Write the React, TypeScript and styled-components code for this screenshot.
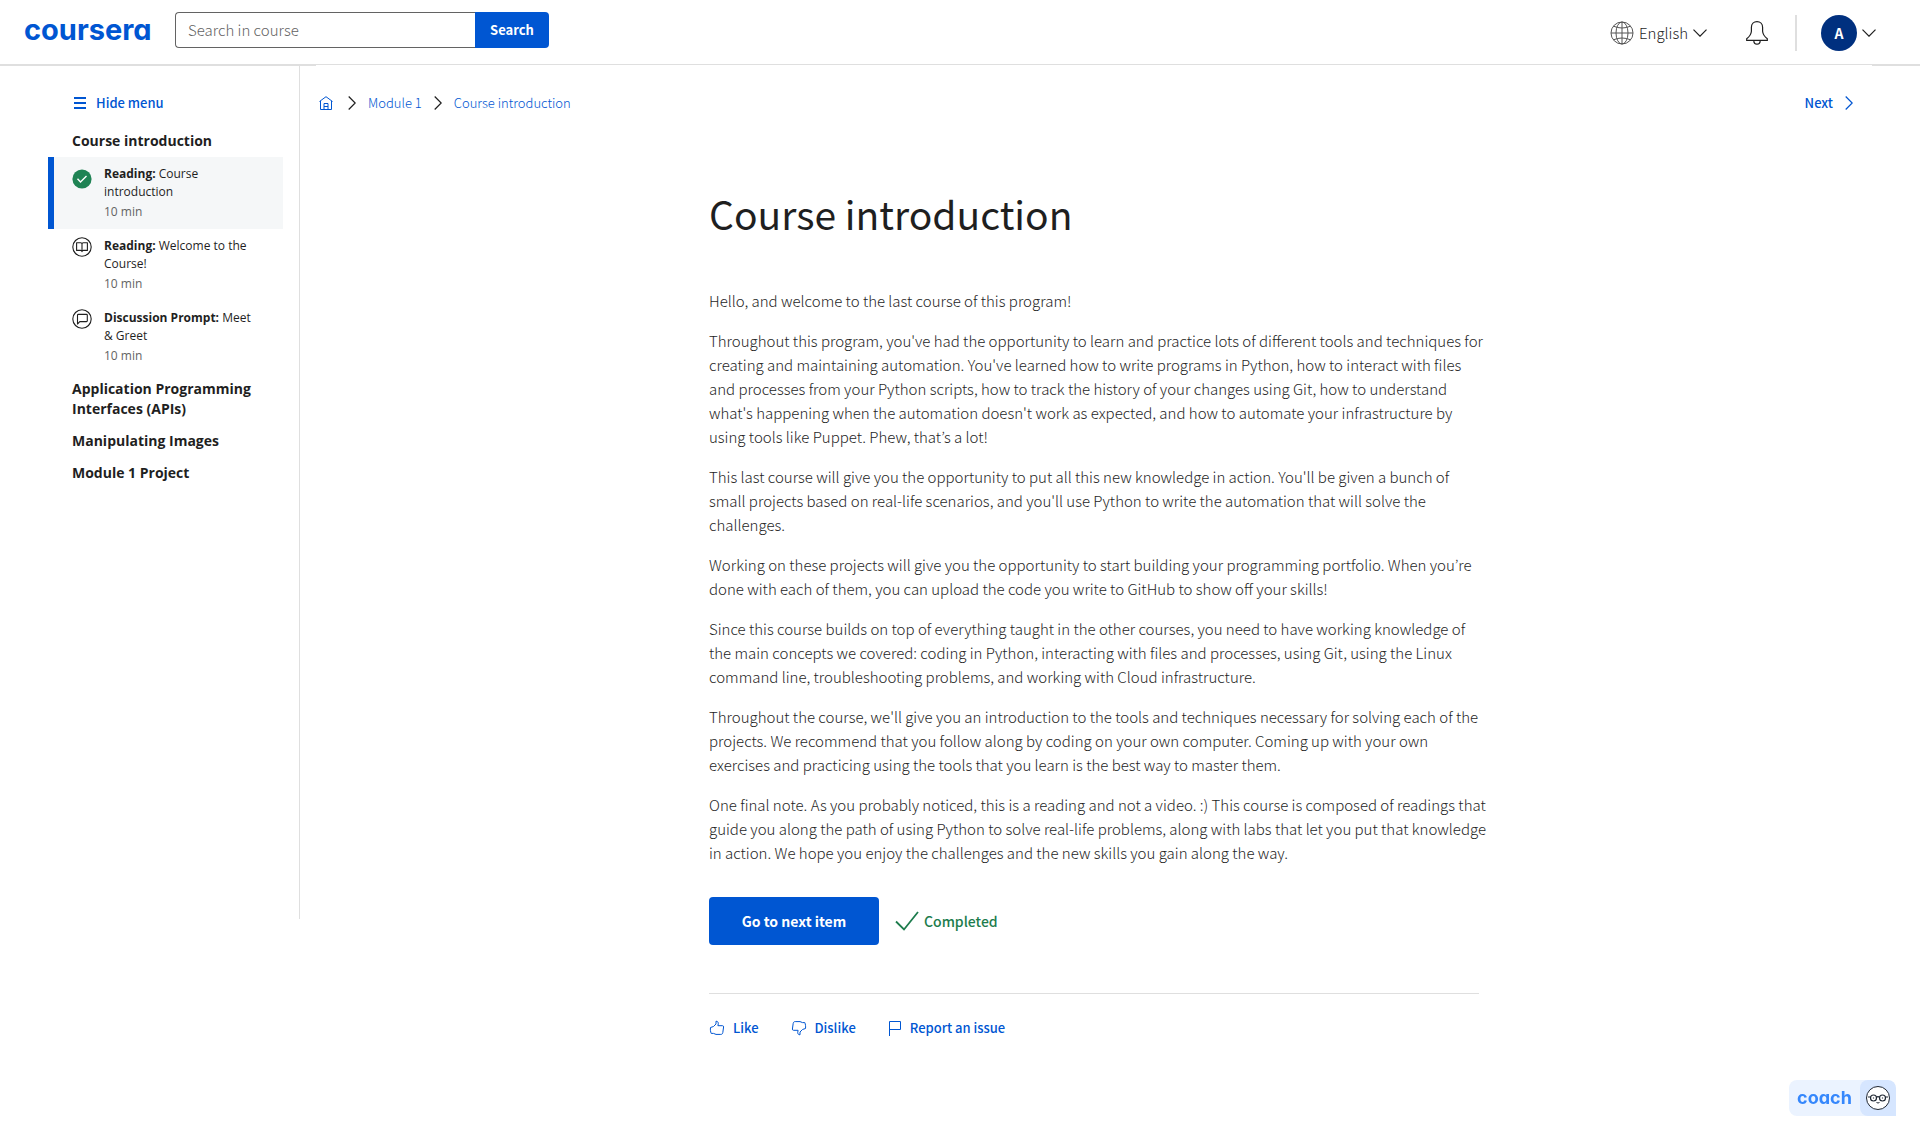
import React from "react";
import styled, { createGlobalStyle } from "styled-components";

const blue = "#0056d2";
const ink = "#1f1f1f";
const line = "#dfdfdf";
const sourceSans = `"Source Sans Pro", "Noto Sans CJK KR", "Noto Sans", sans-serif`;
const openSans = `"Open Sans", "Noto Sans", sans-serif`;
const brandSans = `Inter, "Noto Sans", sans-serif`;

const GlobalStyle = createGlobalStyle`
  *, *::before, *::after { box-sizing: border-box; }
  body { margin: 0; background: #fff; color: ${ink}; font-family: ${sourceSans}; font-size: 14px; line-height: 24px; }
  button, input { font: inherit; color: inherit; }
  button { border: 0; padding: 0; background: none; cursor: pointer; }
  a { text-decoration: none; }
  h1, h2, p, ul, ol { margin: 0; padding: 0; }
  ul, ol { list-style: none; }
  svg { display: block; flex: none; }
`;

const Header = styled.header`
  display: flex;
  align-items: flex-start;
  justify-content: space-between;
  height: 65px;
  padding: 12px 44px 0 24px;
  border-bottom: 1px solid ${line};
`;

const HeaderGroup = styled.div`
  display: flex;
  align-items: center;
`;

const Logo = styled.a`
  width: 151px;
  color: ${blue};
  font-family: ${brandSans};
  font-feature-settings: "cv11";
  font-size: 29px;
  font-weight: 700;
  line-height: 36px;
`;

const SearchForm = styled.form`
  display: flex;
  height: 36px;
`;

const SearchInput = styled.input`
  width: 300px;
  padding: 0 12px;
  border: 1px solid #636363;
  border-right: 0;
  border-radius: 4px 0 0 4px;
  background: #fff;
  outline: none;
  font-size: 15px;
  font-weight: 300;
  &::placeholder { color: #636363; opacity: 1; }
`;

const SearchButton = styled.button`
  width: 74px;
  border-radius: 0 4px 4px 0;
  background: ${blue};
  color: #fff;
  font-size: 13px;
  font-weight: 700;
`;

const AccountGroup = styled(HeaderGroup)`
  padding-top: 3px;
`;

const LanguageButton = styled.button`
  display: flex;
  align-items: center;
  gap: 5px;
  margin-right: 39px;
  font-size: 15px;
  font-weight: 300;
`;

const BellButton = styled.button`
  margin-right: 27px;
`;

const Separator = styled.span`
  width: 2px;
  height: 36px;
  margin-right: 24px;
  background: ${line};
`;

const ProfileButton = styled.button`
  display: flex;
  align-items: center;
  gap: 5px;
`;

const Avatar = styled.span`
  width: 36px;
  height: 36px;
  border-radius: 50%;
  background: #00307f;
  color: #fff;
  font-weight: 700;
  line-height: 36px;
`;

const Shell = styled.div`
  display: flex;
  align-items: flex-start;
  padding-right: 48px;
  border-top: 1px solid ${line};
`;

const Sidebar = styled.nav`
  flex: none;
  width: 300px;
  height: calc(100vh - 287px);
  margin-right: 16px;
  padding: 25px 16px 0 48px;
  border-right: 1px solid ${line};
  font-family: ${openSans};
`;

const MenuToggle = styled.button`
  display: flex;
  align-items: center;
  gap: 10px;
  margin: 0 0 10px 24px;
  padding-left: 2px;
  color: ${blue};
  font-family: ${sourceSans};
  font-size: 13px;
  font-weight: 500;
`;

const SectionTitle = styled.h2`
  padding: 6px 24px;
  color: ${ink};
  font-size: 14px;
  font-weight: 700;
  line-height: 20px;
`;

const Lesson = styled.a<{ $active?: boolean }>`
  display: flex;
  gap: 12px;
  padding: 8px 24px 6px 18px;
  border-left: 6px solid ${(p) => (p.$active ? blue : "transparent")};
  background: ${(p) => (p.$active ? "#f5f7f8" : "transparent")};
  color: ${ink};
  font-size: 12px;
  line-height: 18px;
  & > svg { margin-top: ${(p) => (p.$active ? "4px" : "0")}; }
`;

const LessonKind = styled.strong`
  font-weight: 700;
`;

const Duration = styled.p`
  color: #636363;
  line-height: 22px;
`;

const Main = styled.main`
  flex: 1;
  min-width: 0;
  margin-top: -1px;
  padding-top: 26px;
  background: #fff;
`;

const TopRow = styled.div`
  display: flex;
  align-items: center;
  justify-content: space-between;
  padding: 0 19px 0 3px;
`;

const Crumbs = styled.ol`
  display: flex;
  align-items: center;
  font-size: 13px;
  font-weight: 300;
`;

const Crumb = styled.li`
  display: flex;
  align-items: center;
  & > svg { margin: 0 12px; }
  &:first-child { padding-right: 3px; }
`;

const CrumbLink = styled.a`
  color: ${blue};
`;

const NextLink = styled.a`
  display: flex;
  align-items: center;
  gap: 12px;
  color: ${blue};
  font-size: 13px;
  font-weight: 500;
`;

const Article = styled.article`
  max-width: 770px;
  margin: 74px auto 0;
`;

const Title = styled.h1`
  margin-bottom: 52px;
  font-size: 39px;
  font-weight: 400;
  line-height: 48px;
`;

const Prose = styled.div`
  margin-right: -8px;
`;

const Paragraph = styled.p`
  margin-bottom: 16px;
  font-size: 15px;
  font-weight: 300;
`;

const Actions = styled.div`
  display: flex;
  align-items: center;
  gap: 16px;
  padding: 16px 0 48px;
  border-bottom: 1px solid ${line};
`;

const PrimaryButton = styled.button`
  width: 170px;
  height: 48px;
  border-radius: 4px;
  background: ${blue};
  color: #fff;
  font-weight: 700;
`;

const Completed = styled.span`
  display: flex;
  align-items: center;
  gap: 5px;
  color: #1d7c4d;
  font-weight: 500;
`;

const Feedback = styled.div`
  display: flex;
  gap: 32px;
  padding-top: 22px;
`;

const FeedbackButton = styled.button`
  display: flex;
  align-items: center;
  gap: 8px;
  color: ${blue};
  font-size: 13px;
  font-weight: 500;
`;

const CoachButton = styled.button`
  position: fixed;
  right: 24px;
  bottom: 24px;
  display: flex;
  width: 107px;
  height: 36px;
  border-radius: 8px 8px 0 8px;
  background: #ebf3ff;
  overflow: hidden;
`;

const CoachLabel = styled.span`
  flex: 1;
  color: #3587fc;
  font-family: ${brandSans};
  font-feature-settings: "cv11";
  font-size: 18px;
  font-weight: 700;
  line-height: 36px;
`;

const CoachFace = styled.span`
  display: grid;
  place-items: center;
  width: 36px;
  height: 36px;
  border-radius: 8px 8px 0 8px;
  background: #d6e6ff;
`;

const ChevronDown = () => (
  <svg width="14" height="8" viewBox="0 0 14 8" fill="none" stroke={ink} strokeWidth="1.2" aria-hidden="true">
    <path d="M0.5 0.7 7 7.2 13.5 0.7" />
  </svg>
);

const ChevronRight = ({ color = ink }: { color?: string }) => (
  <svg width="8" height="14" viewBox="0 0 8 14" fill="none" stroke={color} strokeWidth="1.2" aria-hidden="true">
    <path d="M0.7 0.5 7.2 7 0.7 13.5" />
  </svg>
);

const Globe = () => (
  <svg width="24" height="24" viewBox="0 0 24 24" fill="none" stroke="#555" strokeWidth="1" aria-hidden="true">
    <circle cx="12" cy="12" r="11" />
    <ellipse cx="12" cy="12" rx="6" ry="11" />
    <path d="M12 1v22M1 12h22M3.5 5.2Q12 8.8 20.5 5.2M3.5 18.8Q12 15.2 20.5 18.8" />
  </svg>
);

const Bell = () => (
  <svg width="22" height="24" viewBox="0 0 22 24" fill="none" stroke={ink} strokeWidth="1.2" aria-hidden="true">
    <path d="M.7 19.4v-1.7c2.6-2 4.5-4.4 4.7-7.5V6.2C5.4 3 7.8.7 11 .7s5.6 2.3 5.6 5.500v4c.2 3.1 2.1 5.500 4.700 7.500v1.700Z" />
    <path d="M7.8 19.4c0 2.3 1.3 3.7 3.2 3.7s3.2-1.4 3.2-3.7" />
  </svg>
);

const MenuIcon = () => (
  <svg width="12" height="12" viewBox="0 0 12 12" fill={blue} aria-hidden="true">
    <path d="M0 0h12v2H0zM0 5h12v2H0zM0 10h12v2H0z" />
  </svg>
);

const HomeIcon = () => (
  <svg width="14" height="14" viewBox="0 0 14 14" fill="none" stroke={blue} strokeWidth="1" aria-hidden="true">
    <path d="M.5 5.5 7 .7l6.5 4.800M1.500 5v8.500h11V5M5 13.500v-6h4v6M5 10.500h4" />
  </svg>
);

const DoneIcon = () => (
  <svg width="20" height="20" viewBox="0 0 20 20" fill="none" aria-hidden="true">
    <circle cx="10" cy="10" r="9.6" fill="#1f8354" />
    <path d="m5.5 9.8 3 3.2 6-6" stroke="#fff" strokeWidth="1.4" />
  </svg>
);

const BookIcon = () => (
  <svg width="20" height="20" viewBox="0 0 20 20" fill="none" stroke={ink} strokeWidth="1.1" strokeLinejoin="round" aria-hidden="true">
    <circle cx="10" cy="10" r="9.2" />
    <path d="M10 7c0-.7-.6-1.2-1.3-1.2H4.6v7.6h4c.8 0 1.4.5 1.4 1.2 0-.7.6-1.2 1.4-1.2h4V5.8h-4.100C10.6 5.8 10 6.3 10 7Zm0 0v7.6" />
  </svg>
);

const PromptIcon = () => (
  <svg width="20" height="20" viewBox="0 0 20 20" fill="none" stroke={ink} strokeWidth="1.1" strokeLinejoin="round" aria-hidden="true">
    <circle cx="10" cy="10" r="9.2" />
    <path d="M5.5 15V6.2c0-.5.3-.8.8-.8h8.200c.5 0 .8.3.8.8v5.600c0 .5-.3.8-.8.8H7.800Z" />
  </svg>
);

const CheckIcon = () => (
  <svg width="24" height="20" viewBox="0 0 24 20" fill="none" stroke="#1d7c4d" strokeWidth="1.8" aria-hidden="true">
    <path d="m1 10.5 8 8L23 1" />
  </svg>
);

const ThumbIcon = ({ down }: { down?: boolean }) => (
  <svg width="16" height="16" viewBox="0 0 16 16" fill="none" stroke={blue} strokeWidth="1" strokeLinejoin="round" aria-hidden="true">
    <path
      transform={down ? "rotate(180 8 8)" : undefined}
      d="M1.5 7.5 4.5 6.5 7 4V1.200c1.6 0 2.3 1 2.3 2.300L8.900 5.700h4.600c.7 0 1.2.5 1.1 1.200l-.8 5.700c-.2 1.200-.8 1.800-2 1.800H7L4.500 13.400H2.200c-.7-1.600-1-3.800-.7-5.900Z"
    />
  </svg>
);

const FlagIcon = () => (
  <svg width="14" height="16" viewBox="0 0 14 16" fill="none" stroke={blue} strokeWidth="1" aria-hidden="true">
    <path d="M1.5 16V1.5h11v8h-11" />
  </svg>
);

const Face = () => (
  <svg width="24" height="24" viewBox="0 0 24 24" fill="none" stroke="#1f2733" aria-hidden="true">
    <circle cx="12" cy="12" r="11.5" fill="#fff" />
    <path d="M2 11h2.5M19.5 11H22M10.5 11.2q1.5-1 3 0" strokeWidth="1.2" />
    <circle cx="7.5" cy="12" r="3" strokeWidth="1.2" />
    <circle cx="16.5" cy="12" r="3" strokeWidth="1.2" />
    <path d="M7.5 11.4v1.2M16.5 11.4v1.2" strokeWidth="1.2" />
    <path d="M10.5 16.5q1.5 1 3 0" strokeWidth="1" />
  </svg>
);

const lessons = [
  { kind: "Reading:", name: "Course introduction", icon: <DoneIcon />, active: true },
  { kind: "Reading:", name: "Welcome to the Course!", icon: <BookIcon /> },
  { kind: "Discussion Prompt:", name: "Meet & Greet", icon: <PromptIcon /> },
];

const otherSections = ["Application Programming Interfaces (APIs)", "Manipulating Images", "Module 1 Project"];

const paragraphs = [
  "Hello, and welcome to the last course of this program!",
  "Throughout this program, you've had the opportunity to learn and practice lots of different tools and techniques for creating and maintaining automation. You've learned how to write programs in Python, how to interact with files and processes from your Python scripts, how to track the history of your changes using Git, how to understand what's happening when the automation doesn't work as expected, and how to automate your infrastructure by using tools like Puppet. Phew, that’s a lot!",
  "This last course will give you the opportunity to put all this new knowledge in action. You'll be given a bunch of small projects based on real-life scenarios, and you'll use Python to write the automation that will solve the challenges.",
  "Working on these projects will give you the opportunity to start building your programming portfolio. When you’re done with each of them, you can upload the code you write to GitHub to show off your skills!",
  "Since this course builds on top of everything taught in the other courses, you need to have working knowledge of the main concepts we covered: coding in Python, interacting with files and processes, using Git, using the Linux command line, troubleshooting problems, and working with Cloud infrastructure.",
  "Throughout the course, we'll give you an introduction to the tools and techniques necessary for solving each of the projects. We recommend that you follow along by coding on your own computer. Coming up with your own exercises and practicing using the tools that you learn is the best way to master them.",
  "One final note. As you probably noticed, this is a reading and not a video. :) This course is composed of readings that guide you along the path of using Python to solve real-life problems, along with labs that let you put that knowledge in action. We hope you enjoy the challenges and the new skills you gain along the way.",
];

export default function App() {
  return (
    <>
      <GlobalStyle />
      <Header>
        <HeaderGroup>
          <Logo href="#">coursera</Logo>
          <SearchForm role="search" onSubmit={(e) => e.preventDefault()}>
            <SearchInput type="text" aria-label="Search in course" placeholder="Search in course" />
            <SearchButton type="submit">Search</SearchButton>
          </SearchForm>
        </HeaderGroup>
        <AccountGroup>
          <LanguageButton type="button">
            <Globe />
            English
            <ChevronDown />
          </LanguageButton>
          <BellButton type="button" aria-label="Notifications">
            <Bell />
          </BellButton>
          <Separator />
          <ProfileButton type="button" aria-label="Account">
            <Avatar>A</Avatar>
            <ChevronDown />
          </ProfileButton>
        </AccountGroup>
      </Header>
      <Shell>
        <Sidebar aria-label="Course">
          <MenuToggle type="button">
            <MenuIcon />
            Hide menu
          </MenuToggle>
          <SectionTitle>Course introduction</SectionTitle>
          <ul>
            {lessons.map((lesson) => (
              <li key={lesson.name}>
                <Lesson href="#" $active={lesson.active}>
                  {lesson.icon}
                  <div>
                    <p>
                      <LessonKind>{lesson.kind}</LessonKind> {lesson.name}
                    </p>
                    <Duration>10 min</Duration>
                  </div>
                </Lesson>
              </li>
            ))}
          </ul>
          {otherSections.map((name) => (
            <SectionTitle key={name}>{name}</SectionTitle>
          ))}
        </Sidebar>
        <Main>
          <TopRow>
            <Crumbs>
              <Crumb>
                <CrumbLink href="#" aria-label="Home">
                  <HomeIcon />
                </CrumbLink>
              </Crumb>
              <Crumb>
                <ChevronRight />
                <CrumbLink href="#">Module 1</CrumbLink>
              </Crumb>
              <Crumb>
                <ChevronRight />
                <CrumbLink href="#">Course introduction</CrumbLink>
              </Crumb>
            </Crumbs>
            <NextLink href="#">
              Next
              <ChevronRight color={blue} />
            </NextLink>
          </TopRow>
          <Article>
            <Title>Course introduction</Title>
            <Prose>
              {paragraphs.map((text) => (
                <Paragraph key={text}>{text}</Paragraph>
              ))}
            </Prose>
            <Actions>
              <PrimaryButton type="button">Go to next item</PrimaryButton>
              <Completed>
                <CheckIcon />
                Completed
              </Completed>
            </Actions>
            <Feedback>
              <FeedbackButton type="button">
                <ThumbIcon />
                Like
              </FeedbackButton>
              <FeedbackButton type="button">
                <ThumbIcon down />
                Dislike
              </FeedbackButton>
              <FeedbackButton type="button">
                <FlagIcon />
                Report an issue
              </FeedbackButton>
            </Feedback>
          </Article>
        </Main>
      </Shell>
      <CoachButton type="button">
        <CoachLabel>coach</CoachLabel>
        <CoachFace>
          <Face />
        </CoachFace>
      </CoachButton>
    </>
  );
}
